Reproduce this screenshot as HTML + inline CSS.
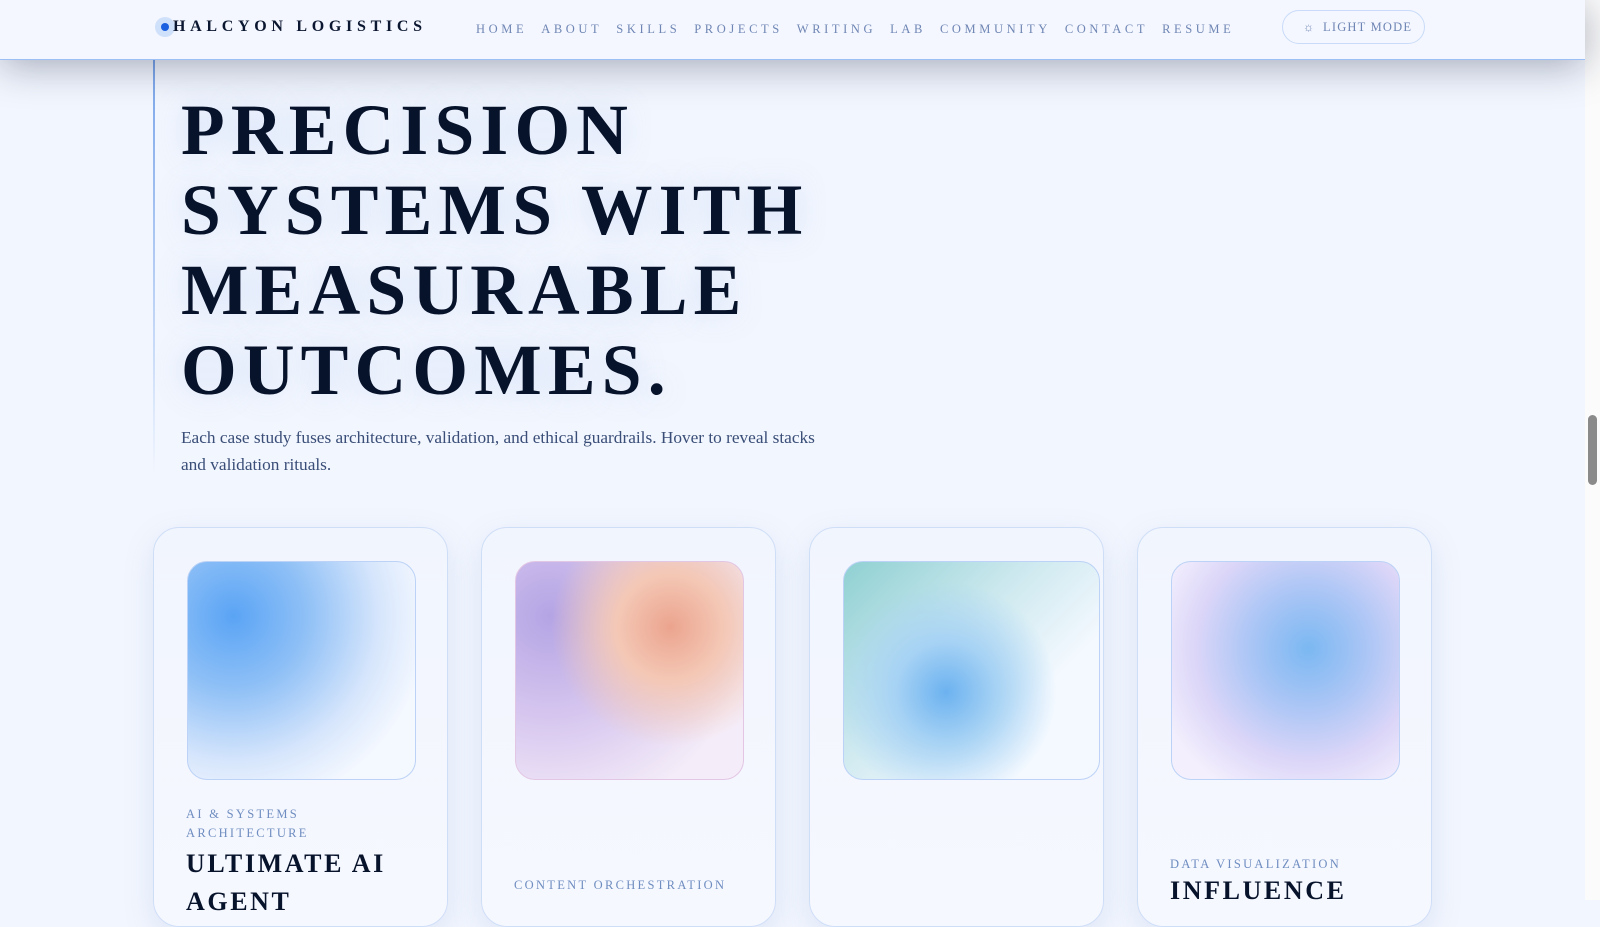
<!DOCTYPE html>
<html><head><style>
*{margin:0;padding:0;box-sizing:border-box}
body{width:1600px;height:900px;overflow:hidden;background:#f2f6fe;font-family:"Liberation Serif",serif;position:relative}
.hdr{position:absolute;left:0;top:0;width:1585px;height:60px;background:#f4f7ff;box-shadow:0 6px 40px rgba(20,30,60,.35);border-bottom:1px solid #9cc0f5;z-index:5}
.logo{position:absolute;left:155px;top:17px;width:20px;height:20px;border-radius:50%;background:#cfe0fb}
.logo:after{content:"";position:absolute;left:6px;top:6px;width:8px;height:8px;border-radius:50%;background:#1a5fe0}
.brand{position:absolute;left:173px;top:18px;font-size:16px;font-weight:bold;letter-spacing:4.7px;color:#0b1730}
.nav{position:absolute;left:476px;top:22px;font-size:12.5px;letter-spacing:3.6px;color:#6f86b4;white-space:nowrap}
.nav span{margin-right:14px}
.btn{position:absolute;left:1282px;top:10px;width:143px;height:34px;border:1px solid #c9dbf8;border-radius:17px;font-size:12.5px;letter-spacing:1.2px;color:#6f86b4;padding:9px 0 0 40px}
.btn i{position:absolute;left:20px;top:9px;font-style:normal;font-size:12px}
.sb{position:absolute;left:1585px;top:0;width:15px;height:900px;background:#fbfbfb}
.thumb{position:absolute;left:1588px;top:415px;width:9px;height:70px;border-radius:5px;background:#8a8a8a}
.vline{position:absolute;left:153px;top:59px;width:2px;height:415px;background:linear-gradient(#7aa5ea,#c9dbf8 70%,transparent)}
h1{position:absolute;left:181px;top:91px;font-size:71.5px;line-height:80px;font-weight:bold;color:#07132b;letter-spacing:6.2px;text-shadow:0 0 30px rgba(120,160,230,.25)}
p.lead{position:absolute;left:181px;top:424px;width:660px;font-size:17.3px;line-height:27px;color:#3a4e78}
.card{position:absolute;top:527px;width:295px;height:400px;border:1px solid #cfdef7;border-radius:26px;background:linear-gradient(#f1f5fe,#f6f8ff);box-shadow:0 10px 30px rgba(120,150,210,.18)}
.img{position:absolute;left:33px;top:33px;width:229px;height:219px;border-radius:20px;border:1px solid #bcd2f6}
.lab{position:absolute;left:32px;font-size:12.5px;line-height:18.5px;letter-spacing:2.3px;color:#6f8dc0}
.tt{position:absolute;left:32px;font-size:26px;line-height:38px;font-weight:bold;letter-spacing:2.6px;color:#07132b}
</style></head><body>
<div class="hdr">
<div class="logo"></div><div class="brand">HALCYON LOGISTICS</div>
<div class="nav"><span>HOME</span><span>ABOUT</span><span>SKILLS</span><span>PROJECTS</span><span>WRITING</span><span>LAB</span><span>COMMUNITY</span><span>CONTACT</span><span>RESUME</span></div>
<div class="btn"><i>☼</i>LIGHT MODE</div>
</div>
<div class="sb"></div><div class="thumb"></div>
<div class="vline"></div>
<h1>PRECISION<br>SYSTEMS WITH<br>MEASURABLE<br>OUTCOMES.</h1>
<p class="lead">Each case study fuses architecture, validation, and ethical guardrails. Hover to reveal stacks and validation rituals.</p>

<div class="card" style="left:153px">
<div class="img" style="background:radial-gradient(circle at 20% 25%,#5aa4f5 0,#8fc0f6 30%,#d7e6fc 60%,#f4f8ff 80%)"></div>
<div class="lab" style="top:277px">AI &amp; SYSTEMS<br>ARCHITECTURE</div>
<div class="tt" style="top:317px">ULTIMATE AI<br>AGENT</div>
</div>
<div class="card" style="left:481px">
<div class="img" style="border-color:#e3c6e4;background:radial-gradient(circle at 68% 30%,#eba48e 0,#f4c8b6 25%,transparent 55%),radial-gradient(circle at 15% 25%,#b4a4e4 0,#d6c6ef 40%,#f4ecf8 80%)"></div>
<div class="lab" style="top:348px">CONTENT ORCHESTRATION</div>
</div>
<div class="card" style="left:809px">
<div class="img" style="width:257px;background:radial-gradient(circle at 40% 60%,#6cb2f0 0,#a6d2f4 25%,transparent 55%),linear-gradient(135deg,#8fd0d2 0,#cde9ef 40%,#f4f9ff 70%)"></div>
</div>
<div class="card" style="left:1137px">
<div class="img" style="background:radial-gradient(circle at 60% 40%,#7bb8f2 0,#a9c5f5 30%,#dcd6f8 60%,#f3effd 85%)"></div>
<div class="lab" style="top:327px">DATA VISUALIZATION</div>
<div class="tt" style="top:344px">INFLUENCE</div>
</div>
</body></html>
